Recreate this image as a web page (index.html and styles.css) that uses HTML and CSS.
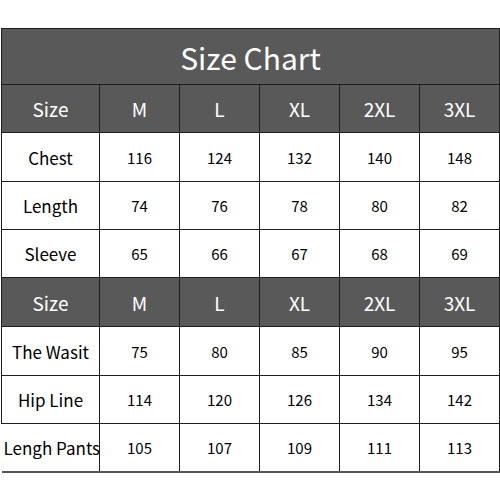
FILE: index.html
```
<!DOCTYPE html>
<html>
<head>
<meta charset="utf-8">
<link rel="stylesheet" href="styles.css">
</head>
<body>
<table class="chart">
  <colgroup>
    <col class="c-label"><col class="c-val"><col class="c-val"><col class="c-val"><col class="c-val"><col class="c-val">
  </colgroup>
  <tr class="title"><td colspan="6">Size Chart</td></tr>
  <tr class="head h48"><td>Size</td><td>M</td><td>L</td><td>XL</td><td>2XL</td><td>3XL</td></tr>
  <tr class="h49"><td class="label">Chest</td><td>116</td><td>124</td><td>132</td><td>140</td><td>148</td></tr>
  <tr class="h48"><td class="label">Length</td><td>74</td><td>76</td><td>78</td><td>80</td><td>82</td></tr>
  <tr class="h48"><td class="label">Sleeve</td><td>65</td><td>66</td><td>67</td><td>68</td><td>69</td></tr>
  <tr class="head h49"><td>Size</td><td>M</td><td>L</td><td>XL</td><td>2XL</td><td>3XL</td></tr>
  <tr class="h49"><td class="label">The Wasit</td><td>75</td><td>80</td><td>85</td><td>90</td><td>95</td></tr>
  <tr class="h48"><td class="label">Hip Line</td><td>114</td><td>120</td><td>126</td><td>134</td><td>142</td></tr>
  <tr class="h48 last"><td class="label open">Lengh Pants</td><td>105</td><td>107</td><td>109</td><td>111</td><td>113</td></tr>
</table>
</body>
</html>
```
FILE: styles.css
```
html, body {
  margin: 0;
  padding: 0;
  background: #fff;
}
body {
  padding: 28px 0 0 1px;
  font-family: "Noto Sans CJK SC", "Noto Sans", sans-serif;
  color: #000;
}
.chart {
  border-collapse: collapse;
  table-layout: fixed;
  width: 498px;
}
.c-label { width: 98px; }
.c-val { width: 80px; }
.chart td {
  border: 1px solid #1e1e1e;
  text-align: center;
  vertical-align: middle;
  padding: 0;
  font-size: 15px;
  line-height: 1;
  white-space: nowrap;
  overflow: visible;
}
.chart td.label {
  font-size: 17px;
}
.title td {
  height: 55px;
  background: #595959;
  color: #fff;
  font-size: 30px;
}
.head td {
  background: #595959;
  color: #fff;
  font-size: 19px;
}
.h48 td { height: 47px; }
.h49 td { height: 48px; }
.last td {
  border-bottom: 2px solid #555;
}
.chart td.open {
  border-left: none;
  text-align: left;
  padding-left: 2px;
}
```
